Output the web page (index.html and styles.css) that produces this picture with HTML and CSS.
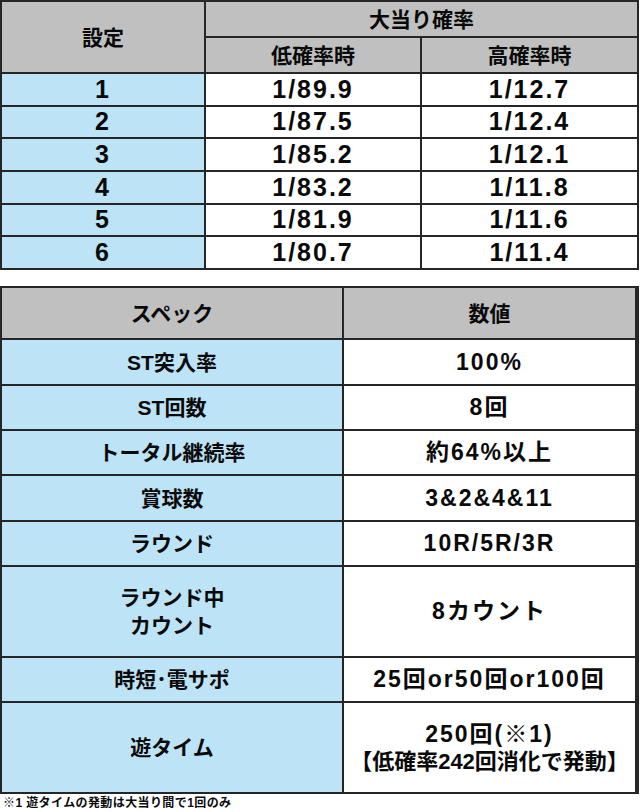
FILE: index.html
```html
<!DOCTYPE html>
<html lang="ja">
<head>
<meta charset="utf-8">
<title>スペック</title>
<link rel="stylesheet" href="styles.css">
</head>
<body>
<div class="prob">
  <div class="cell head span-rows">設定</div>
  <div class="cell head span-cols">大当り確率</div>
  <div class="cell head">低確率時</div>
  <div class="cell head">高確率時</div>

  <div class="cell key num">1</div><div class="cell num">1/89.9</div><div class="cell num">1/12.7</div>
  <div class="cell key num">2</div><div class="cell num">1/87.5</div><div class="cell num">1/12.4</div>
  <div class="cell key num">3</div><div class="cell num">1/85.2</div><div class="cell num">1/12.1</div>
  <div class="cell key num">4</div><div class="cell num">1/83.2</div><div class="cell num">1/11.8</div>
  <div class="cell key num">5</div><div class="cell num">1/81.9</div><div class="cell num">1/11.6</div>
  <div class="cell key num">6</div><div class="cell num">1/80.7</div><div class="cell num">1/11.4</div>
</div>

<div class="spec">
  <div class="cell head">スペック</div><div class="cell head">数値</div>
  <div class="cell key">ST突入率</div><div class="cell num">100%</div>
  <div class="cell key">ST回数</div><div class="cell num">8回</div>
  <div class="cell key">トータル継続率</div><div class="cell num">約64%以上</div>
  <div class="cell key">賞球数</div><div class="cell num">3&amp;2&amp;4&amp;11</div>
  <div class="cell key">ラウンド</div><div class="cell num">10R/5R/3R</div>
  <div class="cell key multi">ラウンド中<br>カウント</div><div class="cell num">8カウント</div>
  <div class="cell key">時短･電サポ</div><div class="cell num">25回or50回or100回</div>
  <div class="cell key">遊タイム</div><div class="cell num multi tight"><span class="lead">250回(※1)</span><br>【低確率242回消化で発動】</div>
</div>

<p class="note">※1 遊タイムの発動は大当り間で1回のみ</p>
</body>
</html>
```

FILE: styles.css
```css
html, body {
  margin: 0;
  padding: 0;
  background: #ffffff;
}

body {
  width: 640px;
  font-family: "Liberation Sans", "Noto Sans CJK JP", sans-serif;
  font-weight: bold;
  color: #0a0a0a;
}

.prob,
.spec {
  display: grid;
  gap: 2px;
  padding: 2px;
  background: #262626;
  width: 635px;
}

.prob {
  grid-template-columns: 202px 214px 215px;
  grid-template-rows: 34px 34px repeat(6, minmax(0, 1fr));
  height: 266px;
}

.spec {
  margin-top: 16px;
  grid-template-columns: 340px 291px;
  grid-template-rows: 50px 44px 43px 43px 44px 43px 89px 43px 89px;
}

.cell {
  display: flex;
  align-items: center;
  justify-content: center;
  text-align: center;
  background: #ffffff;
  font-size: 21px;
  line-height: 1;
  min-height: 0;
  white-space: nowrap;
}

.head {
  background: #c0c0c0;
}

.key {
  background: #bde3f7;
}

.num {
  font-size: 25px;
  letter-spacing: 2px;
}

.span-rows {
  grid-row: span 2;
}

.span-cols {
  grid-column: span 2;
}

.spec .num {
  font-size: 23px;
  letter-spacing: 2px;
}

.multi {
  line-height: 28px;
}

.spec .tight {
  display: block;
  font-size: 22px;
  letter-spacing: 0;
  line-height: 27px;
  padding-top: 18px;
}

.lead {
  font-size: 23px;
  letter-spacing: 2px;
}

.note {
  margin: 2px 0 0 3px;
  font-size: 12px;
  line-height: 14px;
  letter-spacing: 0.4px;
}
```
